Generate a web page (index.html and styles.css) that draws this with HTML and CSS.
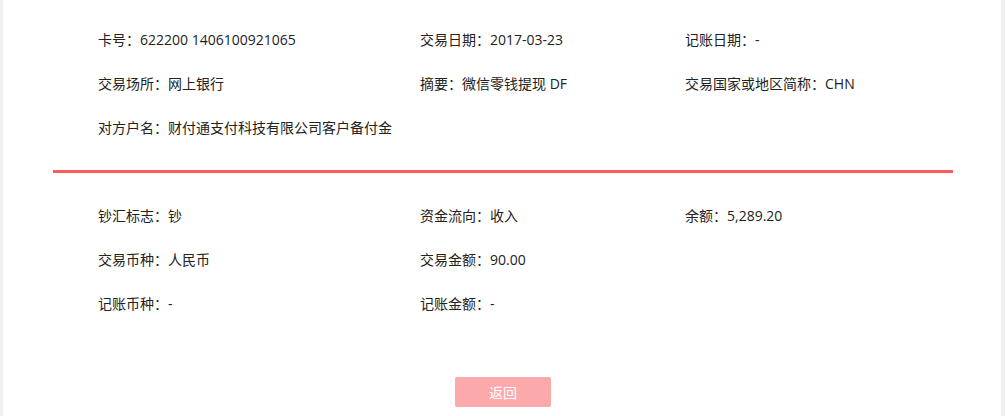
FILE: index.html
```html
<!DOCTYPE html>
<html lang="zh-CN">
<head>
  <meta charset="UTF-8">
  <title>交易明细</title>
  <link rel="stylesheet" href="styles.css">
</head>
<body>
  <div class="card">
    <!-- Transaction info -->
    <div class="section">
      <div class="field">卡号：622200 1406100921065</div>
      <div class="field">交易日期：2017-03-23</div>
      <div class="field">记账日期：-</div>
      <div class="field">交易场所：网上银行</div>
      <div class="field">摘要：微信零钱提现 DF</div>
      <div class="field">交易国家或地区简称：CHN</div>
      <div class="field">对方户名：财付通支付科技有限公司客户备付金</div>
    </div>

    <div class="divider"></div>

    <!-- Amount info -->
    <div class="section">
      <div class="field">钞汇标志：钞</div>
      <div class="field">资金流向：收入</div>
      <div class="field">余额：5,289.20</div>
      <div class="field">交易币种：人民币</div>
      <div class="field">交易金额：90.00</div>
      <div class="field"></div>
      <div class="field">记账币种：-</div>
      <div class="field">记账金额：-</div>
    </div>

    <div class="actions">
      <button class="back">返回</button>
    </div>
  </div>
</body>
</html>
```

FILE: styles.css
```css
body {
  margin: 0;
  background-color: #f0f0f0;
  font-family: "Open Sans", "Noto Sans CJK SC", sans-serif;
  font-size: 14px;
  color: #222;
}

/* White content card */
.card {
  margin: 0 4px 0 3px;
  height: 416px;
  background-color: #fff;
  padding: 18px 48px 0 50px;
  box-sizing: border-box;
  overflow: hidden;
}

.section {
  display: grid;
  grid-template-columns: 322px 265px 1fr;
  padding-left: 45px;
}

.field {
  line-height: 44px;
  height: 44px;
  white-space: nowrap;
}

.divider {
  height: 3px;
  background-color: #fb5b5b;
  margin: 20px 0 21px;
}

/* Back button */
.actions {
  display: flex;
  justify-content: center;
  margin-top: 51px;
}

.back {
  width: 96px;
  height: 30px;
  border: none;
  border-radius: 2px;
  background-color: #fba9ab;
  color: #fff;
  font-family: inherit;
  font-size: 14px;
  cursor: pointer;
}
```
